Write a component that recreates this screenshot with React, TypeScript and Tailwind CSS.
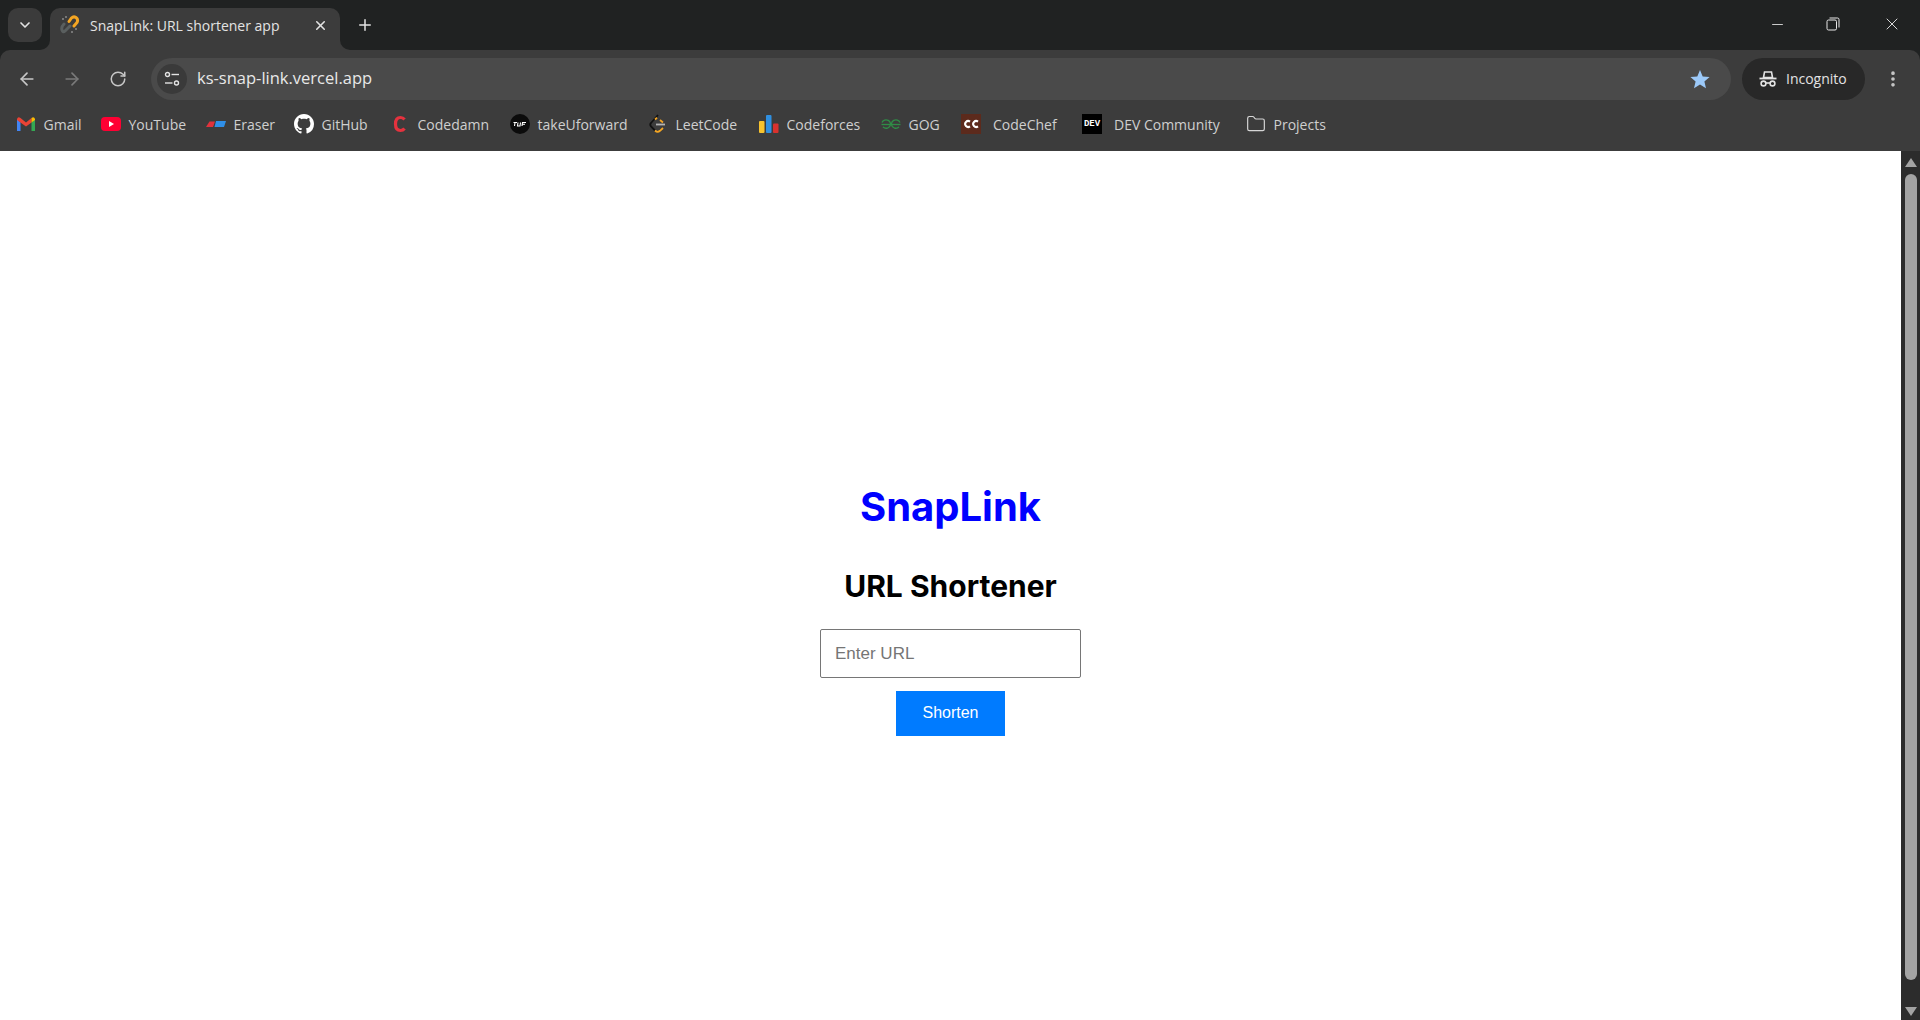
import { ReactNode } from "react";
import { ArrowLeft, ArrowRight, RotateCw, ChevronDown, X, Plus, Minus, EllipsisVertical, Folder } from "lucide-react";

const chromeFont = "font-['Open_Sans',sans-serif]";

function Favicon() {
    return (
        <svg width="20" height="20" viewBox="0 0 20 20" fill="none">
            <path d="M9 6.5 L11.5 3 Q13.5 1 16 2.5 Q18.5 4.5 17 7.5 L14 11" stroke="#f5a623" strokeWidth="3" strokeLinecap="round" />
            <path d="M10 11 L5 16 Q3 18 2 15 Q1 12 4 9" stroke="#5a5f5f" strokeWidth="3" strokeLinecap="round" />
            <circle cx="3" cy="4" r="1" fill="#8a8a8a" />
            <circle cx="6" cy="2" r="1" fill="#8a8a8a" />
            <circle cx="16" cy="14" r="1" fill="#8a8a8a" />
            <circle cx="12" cy="17" r="1" fill="#8a8a8a" />
        </svg>
    );
}

function GmailIcon() {
    return (
        <svg width="20" height="20" viewBox="0 0 20 20" fill="none">
            <path d="M1 5 V17 H4.5 V8.5 Z" fill="#4285f4" />
            <path d="M19 5 V17 H15.5 V8.5 Z" fill="#34a853" />
            <path d="M1 5 Q2 2 4.5 4 L10 8.5 L15.5 4 V8.5 L10 12.5 L1 6 Z" fill="#ea4335" />
            <path d="M15.5 4 Q18 2 19 5 V6 L15.5 8.5 Z" fill="#fbbc04" />
        </svg>
    );
}

function YoutubeIcon() {
    return (
        <svg width="20" height="20" viewBox="0 0 20 20" fill="none">
            <rect y="3" width="20" height="14" rx="4" fill="#ff0033" />
            <path d="M8 7 L13 10 L8 13 Z" fill="#fff" />
        </svg>
    );
}

function EraserIcon() {
    return (
        <svg width="20" height="20" viewBox="0 0 20 20" fill="none">
            <path d="M0 13 L3.5 7.5 H9 L7 13 Z" fill="#e0323c" />
            <path d="M10 7 H20 L18 13 H8.5 Z" fill="#2f8fe8" />
        </svg>
    );
}

function GithubIcon() {
    return (
        <svg width="20" height="20" viewBox="0 0 16 16" fill="#fff">
            <path d="M8 0C3.58 0 0 3.58 0 8c0 3.54 2.29 6.53 5.47 7.59.4.07.55-.17.55-.38 0-.19-.01-.82-.01-1.49-2.01.37-2.53-.49-2.69-.94-.09-.23-.48-.94-.82-1.13-.28-.15-.68-.52-.01-.53.63-.01 1.08.58 1.23.82.72 1.21 1.87.87 2.33.66.07-.52.28-.87.51-1.07-1.78-.2-3.64-.89-3.64-3.95 0-.87.31-1.59.82-2.15-.08-.2-.36-1.02.08-2.12 0 0 .67-.21 2.2.82.64-.18 1.32-.27 2-.27s1.36.09 2 .27c1.53-1.04 2.2-.82 2.2-.82.44 1.1.16 1.92.08 2.12.51.56.82 1.27.82 2.15 0 3.07-1.87 3.75-3.65 3.95.29.25.54.73.54 1.48 0 1.07-.01 1.93-.01 2.2 0 .21.15.46.55.38A8.01 8.01 0 0 0 16 8c0-4.42-3.58-8-8-8z" />
        </svg>
    );
}

function CodedamnIcon() {
    return (
        <svg width="20" height="20" viewBox="0 0 20 20" fill="none">
            <path d="M14.5 5.5 Q13 3.5 10.5 3.5 Q5.5 3.5 5.5 10 Q5.5 16.5 10.5 16.5 Q13 16.5 14.5 14.5" stroke="#e5323e" strokeWidth="3.2" />
        </svg>
    );
}

function TufIcon() {
    return (
        <svg width="20" height="20" viewBox="0 0 20 20">
            <circle cx="10" cy="10" r="10" fill="#0b0b0b" />
            <path d="M3.5 8.5 H7 M5 8.5 L4.5 12 M8 8.5 L7.5 12 H10 L10.5 8.5 M12 12 L12.5 8.5 H16 M12 10.2 H15" stroke="#fff" strokeWidth="1.1" fill="none" />
        </svg>
    );
}

function LeetcodeIcon() {
    return (
        <svg width="20" height="20" viewBox="0 0 20 20" fill="none">
            <path d="M10 1 L3 9 Q1.5 10.5 3 12.5 L7 16.5" stroke="#111" strokeWidth="1.8" />
            <path d="M7 5.5 L9 3.8 M12 6 L15 8.5" stroke="#f5a623" strokeWidth="1.8" />
            <path d="M8 10.5 H17" stroke="#b3b3b3" strokeWidth="1.8" />
            <path d="M7 16.5 Q9.5 19 12 16.8 L15 14" stroke="#f5a623" strokeWidth="1.8" />
        </svg>
    );
}

function CodeforcesIcon() {
    return (
        <svg width="20" height="20" viewBox="0 0 20 20">
            <rect x="0" y="7" width="5.5" height="12" rx="1" fill="#f7c32e" />
            <rect x="7" y="1" width="5.5" height="18" rx="1" fill="#2f8fe0" />
            <rect x="14" y="9.5" width="5.5" height="9.5" rx="1" fill="#d8322e" />
        </svg>
    );
}

function GogIcon() {
    return (
        <svg width="20" height="20" viewBox="0 0 20 20" fill="none" stroke="#2f8d46" strokeWidth="1.3">
            <path d="M0.5 10.5 H19.5" />
            <path d="M1 8.5 A4.4 4.2 0 1 1 2 13 A4.4 4.2 0 0 0 9.5 10.5" />
            <path d="M19 8.5 A4.4 4.2 0 1 0 18 13 A4.4 4.2 0 0 1 10.5 10.5" />
        </svg>
    );
}

function CodechefIcon() {
    return (
        <svg width="20" height="20" viewBox="0 0 20 20">
            <rect width="20" height="20" fill="#5c2a1c" />
            <path d="M9 7.6 A3 3 0 1 0 9 12.4 M17 7.6 A3 3 0 1 0 17 12.4" stroke="#fff" strokeWidth="2" fill="none" />
        </svg>
    );
}

function DevIcon() {
    return (
        <div className="w-5 h-5 bg-black flex items-center justify-center text-white text-[9px] font-bold font-['Liberation_Mono',monospace] leading-none">
            DEV
        </div>
    );
}

function SiteControlsIcon() {
    return (
        <svg width="16" height="16" viewBox="0 0 16 16" fill="none" stroke="#e3e3e3" strokeWidth="1.4">
            <circle cx="3.5" cy="3.5" r="2" />
            <path d="M7.5 3.5 H15" />
            <path d="M1 12 H8.5" />
            <circle cx="12.5" cy="12" r="2" />
        </svg>
    );
}

function IncognitoIcon() {
    return (
        <svg width="20" height="20" viewBox="0 0 20 20" fill="none">
            <path d="M5.5 8.5 L6.5 3 H13.5 L14.5 8.5 Z" stroke="#e3e3e3" strokeWidth="1.6" />
            <path d="M1.5 9.5 H18.5" stroke="#e3e3e3" strokeWidth="1.8" />
            <circle cx="5.5" cy="14.5" r="2.4" stroke="#e3e3e3" strokeWidth="1.6" />
            <circle cx="14.5" cy="14.5" r="2.4" stroke="#e3e3e3" strokeWidth="1.6" />
            <path d="M8 14 H12" stroke="#e3e3e3" strokeWidth="1.6" />
        </svg>
    );
}

function Bookmark({ icon, label, w, wide }: { icon: ReactNode; label: string; w: string; wide?: boolean }) {
    return (
        <div className={`flex items-center shrink-0 ${wide ? "gap-3" : "gap-[7.5px]"} ${w}`}>
            <div className="w-5 h-5 flex items-center justify-center shrink-0">{icon}</div>
            <span className="text-[14px] text-[#cfcfcf] whitespace-nowrap">{label}</span>
        </div>
    );
}

function BrowserChrome() {
    return (
        <div className={`bg-[#202222] shrink-0 ${chromeFont}`}>
            {/* tab strip */}
            <div className="h-[50px] flex items-end">
                <div className="ml-2 mb-2 w-[34px] h-[34px] rounded-[10px] bg-[#3b3b3b] flex items-center justify-center">
                    <ChevronDown size={16} strokeWidth={2.5} color="#e3e3e3" />
                </div>
                <div className="relative ml-2 w-[290px] h-[42px] bg-[#3c3c3c] rounded-t-[10px] flex items-center pl-[10px] pr-[12px] pb-[8px]">
                    {/* curved feet of the active tab */}
                    <div className="absolute bottom-0 left-[-10px] w-[10px] h-[10px] bg-[#3c3c3c]">
                        <div className="w-full h-full bg-[#202222] rounded-br-[10px]" />
                    </div>
                    <div className="absolute bottom-0 right-[-10px] w-[10px] h-[10px] bg-[#3c3c3c]">
                        <div className="w-full h-full bg-[#202222] rounded-bl-[10px]" />
                    </div>
                    <Favicon />
                    <span className="ml-[10px] text-[14px] text-[#e3e3e3] whitespace-nowrap flex-1">SnapLink: URL shortener app</span>
                    <X size={15} strokeWidth={2.5} color="#e3e3e3" />
                </div>
                <div className="ml-[11px] mb-[11px] w-7 h-7 flex items-center justify-center">
                    <Plus size={18} strokeWidth={2} color="#e3e3e3" />
                </div>
                <div className="ml-auto flex items-center h-[50px] pb-[2px]">
                    <div className="w-[56px] flex justify-center"><Minus size={17} strokeWidth={1.2} color="#e8e8e8" /></div>
                    <div className="w-[56px] flex justify-center mr-[3px]">
                        <svg width="14" height="14" viewBox="0 0 14 14" fill="none" stroke="#e8e8e8" strokeWidth="1">
                            <rect x="1" y="3" width="9.5" height="10" rx="1.5" />
                            <path d="M3.5 1 H11.5 Q13 1 13 2.5 V10.5" />
                        </svg>
                    </div>
                    <div className="w-[56px] flex justify-center"><X size={20} strokeWidth={1.1} color="#e8e8e8" /></div>
                </div>
            </div>

            {/* toolbar */}
            <div className="bg-[#3c3c3c] rounded-t-[10px] h-[51px] flex items-center pl-[17px] pr-4 pt-[6px]">
                <ArrowLeft size={20} strokeWidth={2} color="#c7c7c7" />
                <ArrowRight size={20} strokeWidth={2} color="#7a7a7a" className="ml-[25px]" />
                <RotateCw size={18} strokeWidth={2} color="#c7c7c7" className="ml-[27px]" />
                <div className="ml-[24px] w-[1580px] h-[42px] rounded-full bg-[#4a4a4a] flex items-center pl-[6px] pr-[21px]">
                    <div className="w-[30px] h-[30px] rounded-full bg-[#3a3a3a] flex items-center justify-center">
                        <SiteControlsIcon />
                    </div>
                    <span className="ml-[10px] text-[16.5px] text-[#e8e8e8] flex-1">ks-snap-link.vercel.app</span>
                    <svg width="20" height="20" viewBox="0 0 20 20" fill="#9cc9f8">
                        <path d="M10 1 L12.7 7.4 L19.6 8 L14.4 12.5 L16 19.2 L10 15.6 L4 19.2 L5.6 12.5 L0.4 8 L7.3 7.4 Z" />
                    </svg>
                </div>
                <div className="ml-[11px] w-[123px] h-[42px] rounded-full bg-[#282828] flex items-center pl-4 gap-2">
                    <IncognitoIcon />
                    <span className="text-[14px] text-[#e3e3e3]">Incognito</span>
                </div>
                <EllipsisVertical size={20} strokeWidth={2.4} color="#c7c7c7" className="ml-[18px]" />
            </div>

            {/* bookmarks */}
            <div className="bg-[#3c3c3c] h-[50px] flex items-center pl-4 pb-1">
                <Bookmark icon={<GmailIcon />} label="Gmail" w="w-[85px]" />
                <Bookmark icon={<YoutubeIcon />} label="YouTube" w="w-[105px]" />
                <Bookmark icon={<EraserIcon />} label="Eraser" w="w-[88px]" />
                <Bookmark icon={<GithubIcon />} label="GitHub" w="w-[96px]" />
                <Bookmark icon={<CodedamnIcon />} label="Codedamn" w="w-[120px]" />
                <Bookmark icon={<TufIcon />} label="takeUforward" w="w-[138px]" />
                <Bookmark icon={<LeetcodeIcon />} label="LeetCode" w="w-[111px]" />
                <Bookmark icon={<CodeforcesIcon />} label="Codeforces" w="w-[122px]" />
                <Bookmark icon={<GogIcon />} label="GOG" w="w-[80px]" />
                <Bookmark icon={<CodechefIcon />} label="CodeChef" w="w-[121px]" wide />
                <Bookmark icon={<DevIcon />} label="DEV Community" w="w-[164px]" wide />
                <Bookmark icon={<Folder size={20} strokeWidth={1.4} color="#d6d6d6" />} label="Projects" w="w-[100px]" />
            </div>
        </div>
    );
}

function Scrollbar() {
    return (
        <div className="w-[19px] bg-[#2c2c2c] flex flex-col items-center shrink-0">
            <div className="mt-[7px] w-0 h-0 border-l-[6px] border-r-[6px] border-b-[9px] border-l-transparent border-r-transparent border-b-[#a3a3a3]" />
            <div className="mt-[7px] w-[12px] flex-1 rounded-full bg-[#a3a3a3]" />
            <div className="mt-[27px] mb-[4px] w-0 h-0 border-l-[6px] border-r-[6px] border-t-[9px] border-l-transparent border-r-transparent border-t-[#a3a3a3]" />
        </div>
    );
}

export default function App() {
    return (
        <div className="w-[1920px] h-[1020px] flex flex-col overflow-hidden bg-white">
            <BrowserChrome />
            <div className="flex-1 flex min-h-0">
                <main className="flex-1 flex flex-col items-center pt-[332px] font-['Inter',sans-serif]">
                    <h1 className="text-[40px] leading-[48px] font-bold text-[#0000ff]">SnapLink</h1>
                    <h2 className="mt-[37px] text-[30px] leading-[36px] font-bold text-black">URL Shortener</h2>
                    <input
                        placeholder="Enter URL"
                        className="mt-[25px] w-[261px] h-[49px] px-[14px] border border-[#767676] rounded-[2px] text-[17px] placeholder:text-[#757575] font-['Liberation_Sans',sans-serif] outline-none"
                    />
                    <button className="mt-[13px] w-[109px] h-[45px] bg-[#007bff] text-white text-[16px] pb-[2px] font-['Liberation_Sans',sans-serif]">
                        Shorten
                    </button>
                </main>
                <Scrollbar />
            </div>
        </div>
    );
}
